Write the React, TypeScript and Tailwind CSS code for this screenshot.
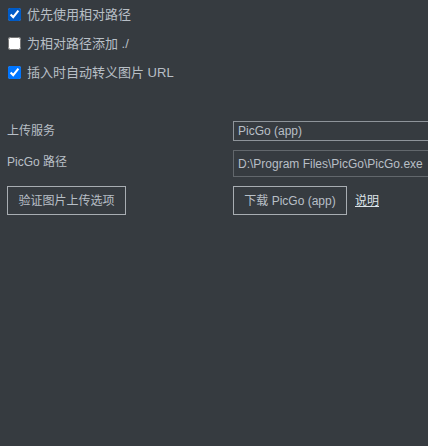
export default function App() {
  const options = [
    { label: "优先使用相对路径", checked: true },
    { label: "为相对路径添加 ./", checked: false },
    { label: "插入时自动转义图片 URL", checked: true },
  ]

  return (
    <main
      className="w-[428px] h-[446px] overflow-hidden bg-[#363b40] text-[#b8bfc6] text-[13px]"
      style={{ fontFamily: '"Liberation Sans", "Noto Sans CJK SC", sans-serif' }}
    >
      {/* Checkbox options */}
      <div className="flex flex-col">
        {options.map((opt) => (
          <label key={opt.label} className="h-[29px] flex items-center pl-[8px] gap-[6px]">
            <input
              type="checkbox"
              defaultChecked={opt.checked}
              className="m-0 w-[13px] h-[13px] accent-[#0075ff]"
            />
            <span>{opt.label}</span>
          </label>
        ))}
      </div>

      {/* Upload settings */}
      <div className="mt-[34px] grid grid-cols-[226px_1fr] gap-y-[9px] pl-[7px] text-[12px]">
        <div className="flex items-center">上传服务</div>
        <div className="w-[220px] h-[20px] border border-[#8e949a] flex items-center px-[4px]">
          PicGo (app)
        </div>

        <div className="flex items-center pb-[3px]">PicGo 路径</div>
        <div className="w-[220px] h-[27px] border border-[#62676c] flex items-center px-[4px] whitespace-nowrap">
          D:\Program Files\PicGo\PicGo.exe
        </div>

        <div className="flex items-center">
          <button className="h-[29px] w-[119px] border border-[#a8adb2] flex items-center justify-center">
            验证图片上传选项
          </button>
        </div>
        <div className="flex items-center gap-[8px]">
          <button className="h-[29px] w-[114px] border border-[#a8adb2] flex items-center justify-center">
            下载 PicGo (app)
          </button>
          <a href="#" className="underline text-[#dde3e8]">说明</a>
        </div>
      </div>
    </main>
  )
}
